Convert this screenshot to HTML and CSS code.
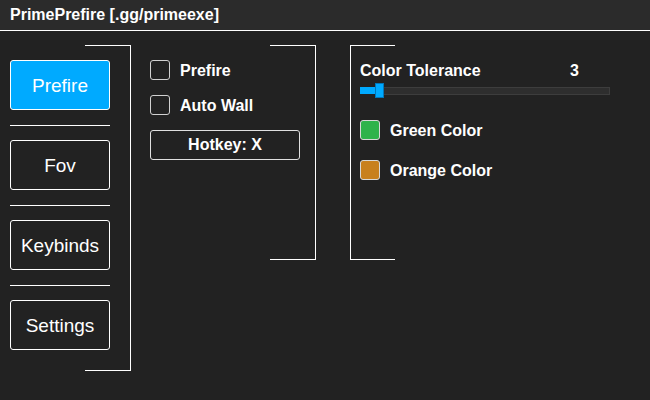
FILE: index.html
```html
<!DOCTYPE html>
<html>
<head>
<meta charset="utf-8">
<link rel="stylesheet" href="styles.css">
</head>
<body>
<div class="app">
  <header class="titlebar">PrimePrefire [.gg/primeexe]</header>
  <main class="panels">
    <nav class="col nav bracket-right">
      <button class="tab active">Prefire</button>
      <div class="sep"></div>
      <button class="tab">Fov</button>
      <div class="sep"></div>
      <button class="tab">Keybinds</button>
      <div class="sep"></div>
      <button class="tab">Settings</button>
    </nav>
    <section class="col mid bracket-right">
      <label class="check-row"><span class="checkbox"></span><span class="label">Prefire</span></label>
      <label class="check-row"><span class="checkbox"></span><span class="label">Auto Wall</span></label>
      <button class="hotkey">Hotkey: X</button>
    </section>
    <section class="col right bracket-left">
      <div class="tol-row"><span class="label">Color Tolerance</span><span class="label">3</span></div>
      <div class="slider">
        <div class="fill"></div>
        <div class="thumb"></div>
        <div class="track"></div>
      </div>
      <div class="color-row first"><span class="swatch green"></span><span class="label">Green Color</span></div>
      <div class="color-row"><span class="swatch orange"></span><span class="label">Orange Color</span></div>
    </section>
  </main>
</div>
</body>
</html>
```
FILE: styles.css
```css
* { box-sizing: border-box; }
html, body { margin: 0; padding: 0; }
body {
  width: 650px;
  height: 400px;
  background: #222222;
  color: #ffffff;
  font-family: "Liberation Sans", Arial, sans-serif;
  overflow: hidden;
}
.app { width: 650px; height: 400px; }
.titlebar {
  height: 31px;
  line-height: 30px;
  padding-left: 10px;
  background: #2b2b2b;
  border-bottom: 1px solid #ffffff;
  font-size: 16px;
  font-weight: bold;
}
.panels {
  display: flex;
  align-items: flex-start;
  padding: 14px 0 0 10px;
}
.col { padding-top: 15px; }
.bracket-right {
  border-right: 1px solid #ffffff;
  background:
    linear-gradient(#fff, #fff) right top / 45px 1px no-repeat,
    linear-gradient(#fff, #fff) right bottom / 45px 1px no-repeat;
}
.bracket-left {
  border-left: 1px solid #ffffff;
  background:
    linear-gradient(#fff, #fff) left top / 44px 1px no-repeat,
    linear-gradient(#fff, #fff) left bottom / 44px 1px no-repeat;
}
.nav {
  width: 121px;
  height: 326px;
  display: flex;
  flex-direction: column;
}
.tab {
  width: 100px;
  height: 50px;
  border: 1px solid #ffffff;
  border-radius: 3px;
  background: transparent;
  color: #ffffff;
  font-family: "Liberation Sans", Arial, sans-serif;
  font-size: 19px;
  padding: 2px 0 0;
}
.tab.active { background: #00aaff; }
.sep {
  width: 100px;
  height: 1px;
  background: #ffffff;
  margin: 15px 0 14px;
}
.mid {
  margin-left: 19px;
  width: 166px;
  height: 215px;
  display: flex;
  flex-direction: column;
  gap: 15px;
}
.check-row {
  display: flex;
  align-items: center;
  height: 20px;
  gap: 10px;
}
.checkbox {
  width: 20px;
  height: 20px;
  border: 1px solid #d0d0d0;
  border-radius: 3px;
}
.label {
  font-size: 16px;
  font-weight: bold;
  line-height: 20px;
}
.check-row .label,
.color-row .label { margin-top: 2px; }
.tol-row .label { padding-top: 1px; }
.hotkey {
  width: 150px;
  height: 30px;
  border: 1px solid #e0e0e0;
  border-radius: 3px;
  background: transparent;
  color: #ffffff;
  font-family: "Liberation Sans", Arial, sans-serif;
  font-size: 16px;
  font-weight: bold;
  padding: 0;
}
.right {
  margin-left: 34px;
  width: 270px;
  height: 215px;
  padding-left: 9px;
}
.tol-row {
  display: flex;
  justify-content: space-between;
  width: 219px;
  height: 20px;
}
.slider {
  margin-top: 3px;
  width: 250px;
  height: 15px;
  display: flex;
  align-items: center;
}
.fill {
  width: 15px;
  height: 7px;
  background: #00aaff;
}
.thumb {
  width: 9px;
  height: 15px;
  background: #00aaff;
  border: 1px solid #0077bb;
}
.track {
  flex: 1;
  height: 8px;
  background: #2e2e2e;
  border: 1px solid #3d3d3d;
  border-left: none;
}
.color-row {
  display: flex;
  align-items: center;
  gap: 10px;
  height: 20px;
  margin-top: 20px;
}
.color-row.first { margin-top: 22px; }
.swatch {
  width: 20px;
  height: 20px;
  border: 1px solid #d8d8d8;
  border-radius: 3px;
}
.swatch.green { background: #2eb34b; }
.swatch.orange { background: #c8801e; }
```
